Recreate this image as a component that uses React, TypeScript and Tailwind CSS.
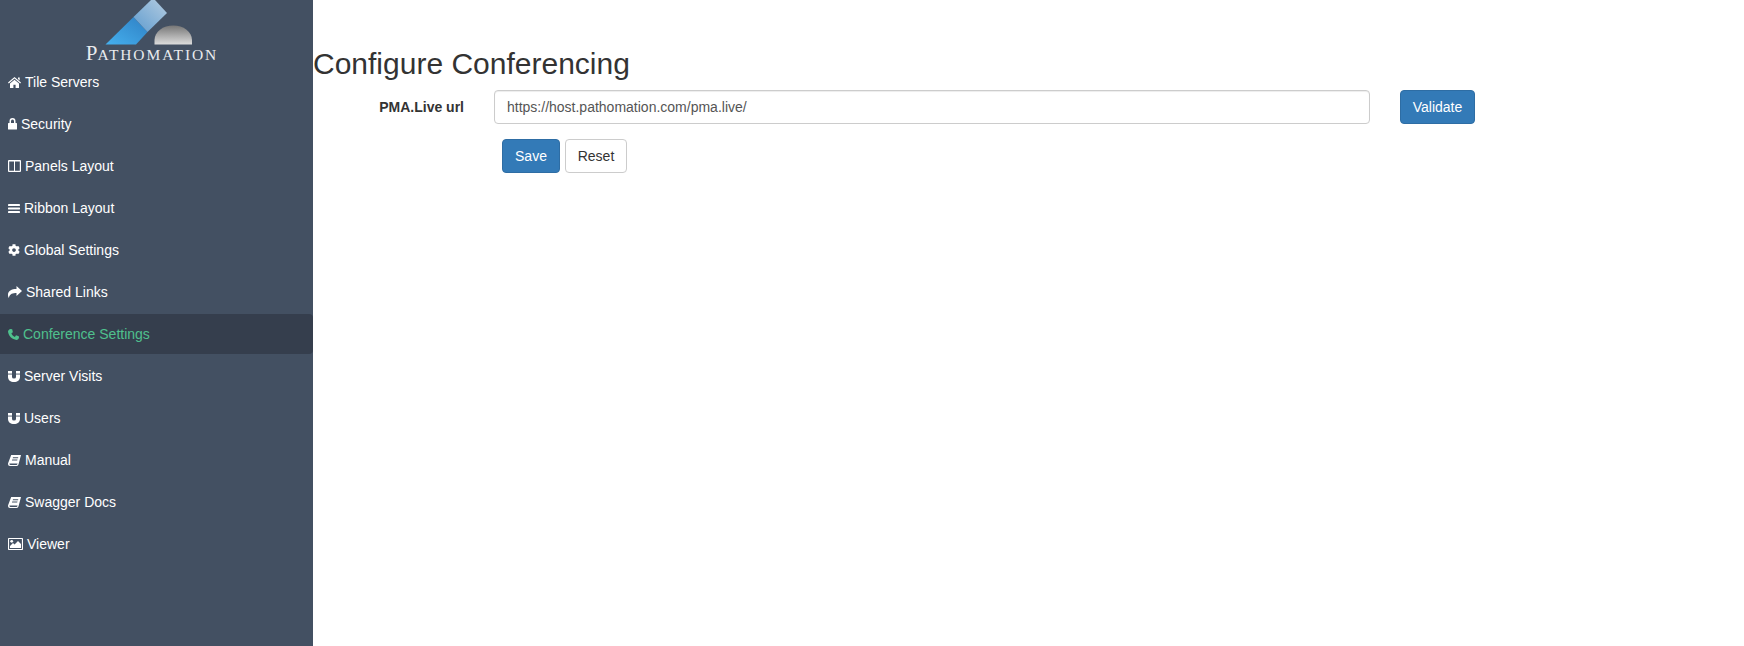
import type { ReactNode } from "react";
import { FaCog } from "react-icons/fa";

function Glyph({ w, h, children }: { w: number; h: number; children: ReactNode }) {
  return (
    <svg width={w} height={h} viewBox={`0 0 ${w} ${h}`} fill="currentColor" fillRule="evenodd" className="shrink-0">
      {children}
    </svg>
  );
}

const MagnetIcon = () => (
  <Glyph w={12} h={11}>
    <rect x="0" y="0" width="4" height="2.6" />
    <rect x="8" y="0" width="4" height="2.6" />
    <path d="M0 3.4H4V6Q4 7.6 6 7.6Q8 7.6 8 6V3.4H12V6C12 9 9.5 11 6 11C2.5 11 0 9 0 6Z" />
  </Glyph>
);

const BookIcon = () => (
  <Glyph w={13} h={11}>
    <path d="M3.2 0H13L10.6 9Q10.3 11 8.6 11H2Q0 11 0 9Q0 8.6.2 8L3 .6ZM5 2.3H10.3L10 3.3H4.7ZM4.2 4.5H9.5L9.2 5.5H3.9ZM1.4 8.6Q1.2 9.9 2.4 9.9H8.6Q9.4 9.9 9.6 8.6Z" />
  </Glyph>
);

const navItems: { label: string; icon: ReactNode; active?: boolean }[] = [
  {
    label: "Tile Servers",
    icon: (
      <Glyph w={13} h={11}>
        <path d="M6.5 0L13 5.6L12.2 6.4L6.5 1.6L.8 6.4L0 5.6Z" />
        <path d="M10 .5H11.7V3.6L10 2.1Z" />
        <path d="M2 6.6L6.5 2.8L11 6.6V11H7.6V7.8H5.4V11H2Z" />
      </Glyph>
    ),
  },
  {
    label: "Security",
    icon: (
      <Glyph w={9} h={12}>
        <path d="M1.5 5V3.2A3 3.2 0 0 1 7.5 3.2V5H8.4Q9 5 9 5.6V11Q9 11.6 8.4 11.6H.6Q0 11.6 0 11V5.6Q0 5 .6 5ZM3 5H6V3.2A1.5 1.6 0 0 0 3 3.2Z" />
      </Glyph>
    ),
  },
  {
    label: "Panels Layout",
    icon: (
      <Glyph w={13} h={12}>
        <path d="M1 0H12Q13 0 13 1V11Q13 12 12 12H1Q0 12 0 11V1Q0 0 1 0ZM1.2 1.6V10.8H6V1.6ZM7 1.6V10.8H11.8V1.6Z" />
      </Glyph>
    ),
  },
  {
    label: "Ribbon Layout",
    icon: (
      <Glyph w={12} h={9}>
        <rect width="12" height="2" rx=".4" />
        <rect y="3.5" width="12" height="2" rx=".4" />
        <rect y="7" width="12" height="2" rx=".4" />
      </Glyph>
    ),
  },
  { label: "Global Settings", icon: <FaCog className="h-[12px] w-[12px] shrink-0" /> },
  {
    label: "Shared Links",
    icon: (
      <Glyph w={14} h={12}>
        <path d="M8.5 0L14 5L8.5 10V7C5 7 1.8 7.5.8 12C0 10.5 0 9.5 0 8.5C0 5 3.5 3 8.5 3Z" />
      </Glyph>
    ),
  },
  {
    label: "Conference Settings",
    icon: (
      <Glyph w={11} h={11}>
        <path d="M2.6 0L4.2.3L4.9 3.2L3.4 4.3C4 6 5.2 7.2 6.9 7.9L8 6.3L10.8 7.2L11 8.8C10.8 10 9.6 11 8.6 11C4 10.6.4 6.8 0 2.6C0 1.4 1.2.2 2.6 0Z" />
      </Glyph>
    ),
    active: true,
  },
  { label: "Server Visits", icon: <MagnetIcon /> },
  { label: "Users", icon: <MagnetIcon /> },
  { label: "Manual", icon: <BookIcon /> },
  { label: "Swagger Docs", icon: <BookIcon /> },
  {
    label: "Viewer",
    icon: (
      <Glyph w={15} h={12}>
        <path d="M.8 0H14.2Q15 0 15 .8V11.2Q15 12 14.2 12H.8Q0 12 0 11.2V.8Q0 0 .8 0ZM1.1 1.1V10.9H13.9V1.1Z" />
        <path d="M2 10V8L5 5L6.5 6.5L10 3L13 6V10Z" />
        <circle cx="3.7" cy="3.3" r="1.4" />
      </Glyph>
    ),
  },
];

function Logo() {
  return (
    <div className="flex h-[62px] flex-col items-center">
      <svg width="313" height="45" viewBox="0 0 313 45" className="shrink-0">
        <defs>
          <linearGradient id="lower" x1="0" y1="1" x2="1" y2="0">
            <stop offset="0" stopColor="#45b0ee" />
            <stop offset="1" stopColor="#2f80c4" />
          </linearGradient>
          <linearGradient id="upper" x1="0" y1="1" x2="1" y2="0">
            <stop offset="0" stopColor="#5f9ccf" />
            <stop offset="1" stopColor="#b3cbe0" />
          </linearGradient>
          <linearGradient id="dome" x1="0" y1="0" x2="0" y2="1">
            <stop offset="0" stopColor="#767676" />
            <stop offset="1" stopColor="#dcdcdc" />
          </linearGradient>
        </defs>
        <polygon points="105.5,44.5 133.5,17 147.5,32 136,44.5" fill="url(#lower)" />
        <polygon points="133.5,17 151,0 155,0 167,13 147.5,32" fill="url(#upper)" />
        <path d="M154.5 44.5 V40 A18.7 14.5 0 0 1 192 40 V44.5 Z" fill="url(#dome)" />
      </svg>
      <div className="mr-[9px] font-['Liberation_Serif',serif] text-[21px] leading-[17px] text-[#e9ebee]">
        P<span className="text-[15.5px] tracking-[1.9px]">ATHOMATION</span>
      </div>
    </div>
  );
}

export default function App() {
  return (
    <div className="flex h-screen overflow-hidden bg-white font-['Liberation_Sans',Arial,sans-serif] text-[14px] text-[#333333]">
      {/* Sidebar */}
      <aside className="w-[313px] shrink-0 bg-[#435062]">
        <Logo />
        <nav className="flex flex-col gap-[2px]">
          {navItems.map((item) => (
            <a
              key={item.label}
              href="#"
              className={`flex h-[40px] items-center gap-[4px] rounded-r pl-[8px] ${
                item.active ? "bg-[#353e4d] text-[#4fc08d]" : "text-white"
              }`}
            >
              {item.icon}
              <span>{item.label}</span>
            </a>
          ))}
        </nav>
      </aside>

      {/* Main */}
      <main className="flex-1 pt-[47px]">
        <h1 className="text-[30px] leading-[33px] font-normal">Configure Conferencing</h1>
        <div className="mt-[10px] flex items-center">
          <label className="w-[151px] text-right font-bold">PMA.Live url</label>
          <input
            readOnly
            value="https://host.pathomation.com/pma.live/"
            className="ml-[30px] h-[34px] w-[876px] rounded border border-[#cccccc] px-[12px] text-[#555555] shadow-[inset_0_1px_1px_rgba(0,0,0,0.075)] outline-none"
          />
          <button className="ml-[30px] h-[34px] w-[75px] rounded border border-[#2e6da4] bg-[#337ab7] text-white">
            Validate
          </button>
        </div>
        <div className="mt-[15px] ml-[189px] flex gap-[5px]">
          <button className="h-[34px] w-[58px] rounded border border-[#2e6da4] bg-[#337ab7] text-white">Save</button>
          <button className="h-[34px] w-[62px] rounded border border-[#cccccc] bg-white">Reset</button>
        </div>
      </main>
    </div>
  );
}
